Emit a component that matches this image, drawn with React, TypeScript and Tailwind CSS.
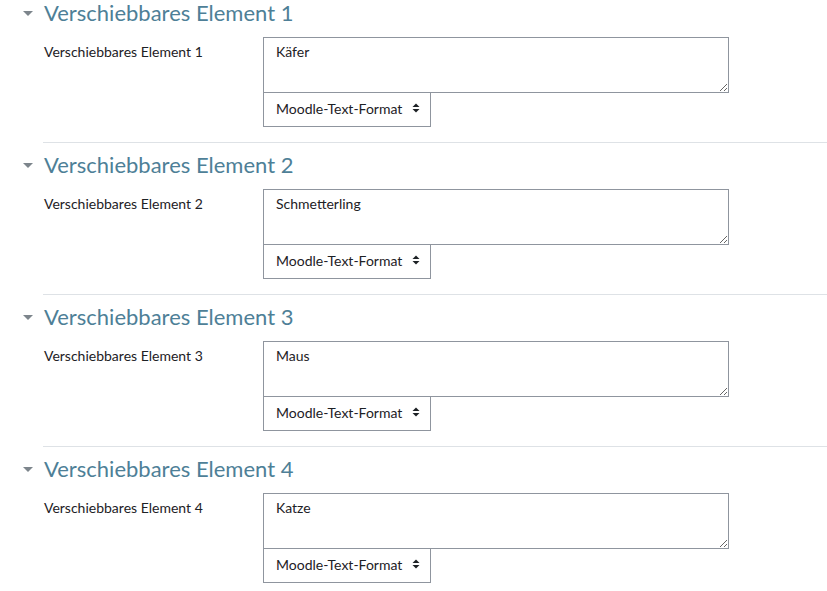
import React from 'react';

const items = [
  { id: 1, value: 'Käfer' },
  { id: 2, value: 'Schmetterling' },
  { id: 3, value: 'Maus' },
  { id: 4, value: 'Katze' },
];

const font = { fontFamily: 'Lato, "Noto Sans", sans-serif' };

const SortIcon: React.FC = () => (
  <svg width="8" height="10" viewBox="0 0 8 10" className="ml-[10px]">
    <path d="M4 0.5 L7.5 4 L0.5 4 Z" fill="#1d2125" />
    <path d="M4 9.5 L7.5 6 L0.5 6 Z" fill="#1d2125" />
  </svg>
);

const Section: React.FC<{ id: number; value: string; last: boolean }> = ({ id, value, last }) => (
  <div className={last ? '' : 'pb-[9px]'}>
    <div className="flex items-center h-[26px]">
      <svg width="10" height="5" viewBox="0 0 10 5" className="ml-[23px] mr-[11px]">
        <path d="M0 0 L10 0 L5 5 Z" fill="#7d858c" />
      </svg>
      <h3 className="text-[22px] text-[#4e7f97] leading-[26px]">Verschiebbares Element {id}</h3>
    </div>
    <div className="flex mt-[11px] pl-[44px]">
      <div className="w-[219px] pt-[6px] text-[14px] text-[#1d2125] leading-[18px]">
        Verschiebbares Element {id}
      </div>
      <div className="flex flex-col">
        <textarea
          defaultValue={value}
          className="w-[466px] h-[56px] border border-[#8f959e] px-[12px] pt-[5px] pb-[7px] text-[14px] text-[#1d2125] leading-[18px] outline-none"
          style={font}
        />
        <div className="flex items-center w-[168px] h-[34px] border border-[#8f959e] border-t-0 pl-[12px] pb-[3px] text-[14px] text-[#1d2125]">
          Moodle-Text-Format
          <SortIcon />
        </div>
      </div>
    </div>
    {!last && <div className="ml-[43px] mt-[15px] border-t border-[#dee2e6]" />}
  </div>
);

export default function App() {
  return (
    <div className="w-[827px] h-[591px] bg-white overflow-hidden" style={font}>
      {items.map((it, i) => (
        <Section key={it.id} id={it.id} value={it.value} last={i === items.length - 1} />
      ))}
    </div>
  );
}
